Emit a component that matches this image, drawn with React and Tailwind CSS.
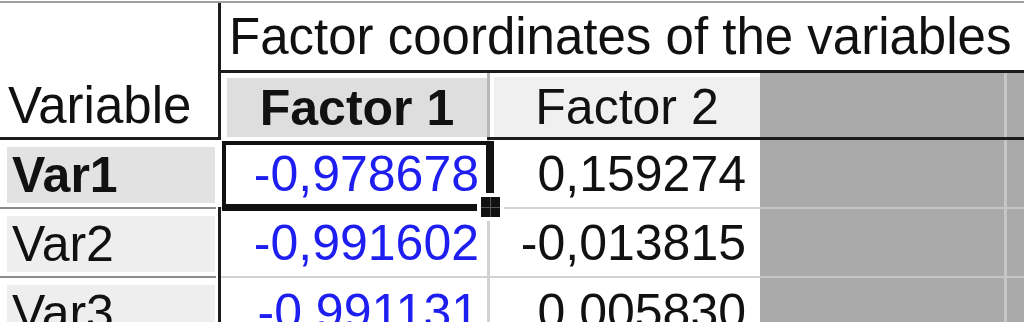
import React from "react";

function DataRow({ label, v1, v2, first }) {
  return (
    <>
      <div className="flex h-[67px]">
        <div className="w-[218px] pt-[7px] pb-[4px] pl-[7px] pr-[3px]">
          <div
            className={
              first
                ? "h-full flex items-center pl-[5px] bg-[#e2e2e2] font-bold"
                : "h-full flex items-center pl-[5px] bg-[#eeeeee]"
            }
          >
            {label}
          </div>
        </div>
        <div className={first ? "w-[3px] bg-white" : "w-[3px] bg-[#1c1c1c]"} />
        <div className="w-[266px] flex items-center justify-end pr-[8px] text-[#1e1ef0]">
          {v1}
        </div>
        <div className="w-[3px] bg-[#d2d2d2]" />
        <div className="w-[270px] flex items-center justify-end pr-[14px]">
          {v2}
        </div>
        <div className="flex-1 flex bg-[#aaaaaa]">
          <div className="w-[244px]" />
          <div className="w-[3px] bg-[#c6c6c6]" />
        </div>
      </div>
      <div className="flex h-[2px]">
        <div className="w-[216px] bg-[#8c8c8c]" />
        <div className="w-[2px] bg-white" />
        <div className="w-[3px] bg-[#1c1c1c]" />
        <div className="w-[539px] bg-[#d2d2d2]" />
        <div className="flex-1 bg-[#c6c6c6]" />
      </div>
    </>
  );
}

export default function App() {
  return (
    <div
      className="relative w-[1024px] h-[322px] overflow-hidden bg-white text-[#111] text-[50px] leading-none"
      style={{ fontFamily: '"Liberation Sans", Arial, sans-serif' }}
    >
      <div className="h-[1px]" />
      <div className="h-[2px] bg-[#a0a0a0]" />
      <div className="flex">
        <div className="w-[218px] flex flex-col">
          <div className="h-[70px]" />
          <div className="h-[64px] flex items-center pl-[8px] text-[51px]">Variable</div>
        </div>
        <div className="w-[3px] bg-[#1c1c1c]" />
        <div className="flex-1 flex flex-col">
          <div className="h-[67px] flex items-center pl-[8px] whitespace-nowrap text-[51px]">
            Factor coordinates of the variables
          </div>
          <div className="h-[3px] bg-[#1c1c1c]" />
          <div className="h-[64px] flex">
            <div className="w-[266px] pt-[5px] pl-[6px]">
              <div className="h-full flex items-center justify-center bg-[#dedede] font-bold">
                Factor 1
              </div>
            </div>
            <div className="w-[3px] bg-[#b8b8b8]" />
            <div className="w-[270px] pt-[4px] pl-[4px]">
              <div className="h-full flex items-center justify-center bg-[#f0f0f0]">
                Factor 2
              </div>
            </div>
            <div className="flex-1 flex bg-[#aaaaaa]">
              <div className="w-[244px]" />
              <div className="w-[3px] bg-[#c6c6c6]" />
            </div>
          </div>
        </div>
      </div>
      <div className="flex h-[3px]">
        <div className="w-[221px] bg-[#1c1c1c]" />
        <div className="w-[266px] bg-white" />
        <div className="flex-1 bg-[#1c1c1c]" />
      </div>
      <DataRow label="Var1" v1="-0,978678" v2="0,159274" first />
      <DataRow label="Var2" v1="-0,991602" v2="-0,013815" />
      <DataRow label="Var3" v1="-0,991131" v2="0,005830" />

      <div className="absolute left-[222px] top-[141px] w-[272px] h-[70px] border-l-[4px] border-t-[4px] border-r-[8px] border-b-[7px] border-[#111]" />
      <div className="absolute left-[477px] top-[193px] w-[27px] h-[28px] bg-white p-[4px]">
        <div className="w-full h-full grid grid-cols-2 grid-rows-2 gap-[1px] bg-[#555]">
          <div className="bg-[#111]" />
          <div className="bg-[#111]" />
          <div className="bg-[#111]" />
          <div className="bg-[#111]" />
        </div>
      </div>
    </div>
  );
}
